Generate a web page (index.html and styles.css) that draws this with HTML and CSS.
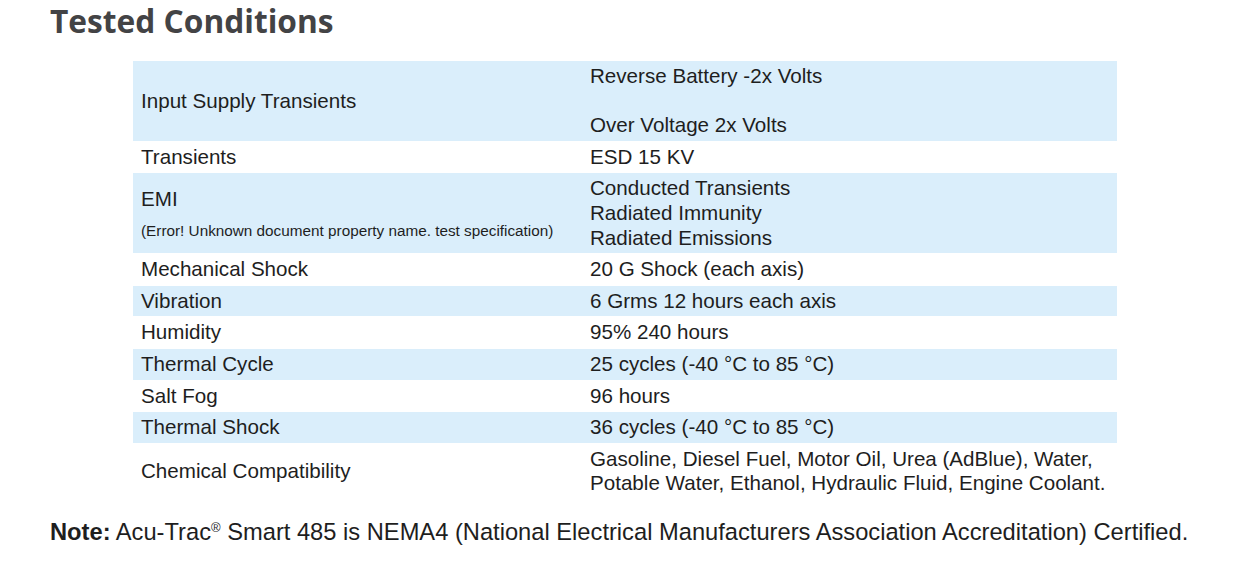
FILE: index.html
```html
<!DOCTYPE html>
<html>
<head>
<meta charset="utf-8">
<link rel="stylesheet" href="styles.css">
</head>
<body>
<div class="page">
  <h2 class="title">Tested Conditions</h2>
  <table class="cond">
    <tr class="blue">
      <td class="k">Input Supply Transients</td>
      <td class="v">Reverse Battery -2x Volts<br>&nbsp;<br>Over Voltage 2x Volts</td>
    </tr>
    <tr>
      <td class="k">Transients</td>
      <td class="v">ESD 15 KV</td>
    </tr>
    <tr class="blue">
      <td class="k emi">EMI<br><span class="small">(Error! Unknown document property name. test specification)</span></td>
      <td class="v">Conducted Transients<br>Radiated Immunity<br>Radiated Emissions</td>
    </tr>
    <tr>
      <td class="k">Mechanical Shock</td>
      <td class="v">20 G Shock (each axis)</td>
    </tr>
    <tr class="blue">
      <td class="k">Vibration</td>
      <td class="v">6 Grms 12 hours each axis</td>
    </tr>
    <tr>
      <td class="k">Humidity</td>
      <td class="v">95% 240 hours</td>
    </tr>
    <tr class="blue">
      <td class="k">Thermal Cycle</td>
      <td class="v">25 cycles (-40 °C to 85 °C)</td>
    </tr>
    <tr>
      <td class="k">Salt Fog</td>
      <td class="v">96 hours</td>
    </tr>
    <tr class="blue">
      <td class="k">Thermal Shock</td>
      <td class="v">36 cycles (-40 °C to 85 °C)</td>
    </tr>
    <tr>
      <td class="k">Chemical Compatibility</td>
      <td class="v">Gasoline, Diesel Fuel, Motor Oil, Urea (AdBlue), Water,<br>Potable Water, Ethanol, Hydraulic Fluid, Engine Coolant.</td>
    </tr>
  </table>
  <p class="note"><b>Note:</b> Acu-Trac<sup>®</sup> Smart 485 is NEMA4 (National Electrical Manufacturers Association Accreditation) Certified.</p>
</div>
</body>
</html>
```
FILE: styles.css
```css
html, body {
  margin: 0;
  padding: 0;
  background: #ffffff;
}

.page {
  padding: 0 0 0 50px;
  font-family: "Liberation Sans", Arial, sans-serif;
  color: #1e1e1e;
}

.title {
  margin: 0;
  padding-top: 2px;
  font-family: "Open Sans", "Lato", sans-serif;
  font-weight: 700;
  font-size: 31.7px;
  line-height: 38px;
  color: #434345;
  letter-spacing: 0;
}

.cond {
  margin: 20px 0 0 83px;
  width: 984px;
  border-collapse: separate;
  border-spacing: 0 1px;
  font-size: 20.6px;
  line-height: 24.6px;
  color: #1e1e1e;
}

.cond td {
  padding: 3px 8px;
  vertical-align: middle;
}

.cond .k {
  width: 433px;
}

.cond tr.blue td {
  background: #daeefb;
}

.cond .emi {
  line-height: 30px;
  padding-top: 6px;
}

.small {
  font-size: 15.3px;
}

.note {
  margin: 18px 0 0 0;
  font-size: 23.7px;
  line-height: 28px;
  color: #1e1e1e;
}

.note b {
  font-weight: 700;
}

.note sup {
  font-size: 13px;
  line-height: 0;
  vertical-align: 8px;
}
```
